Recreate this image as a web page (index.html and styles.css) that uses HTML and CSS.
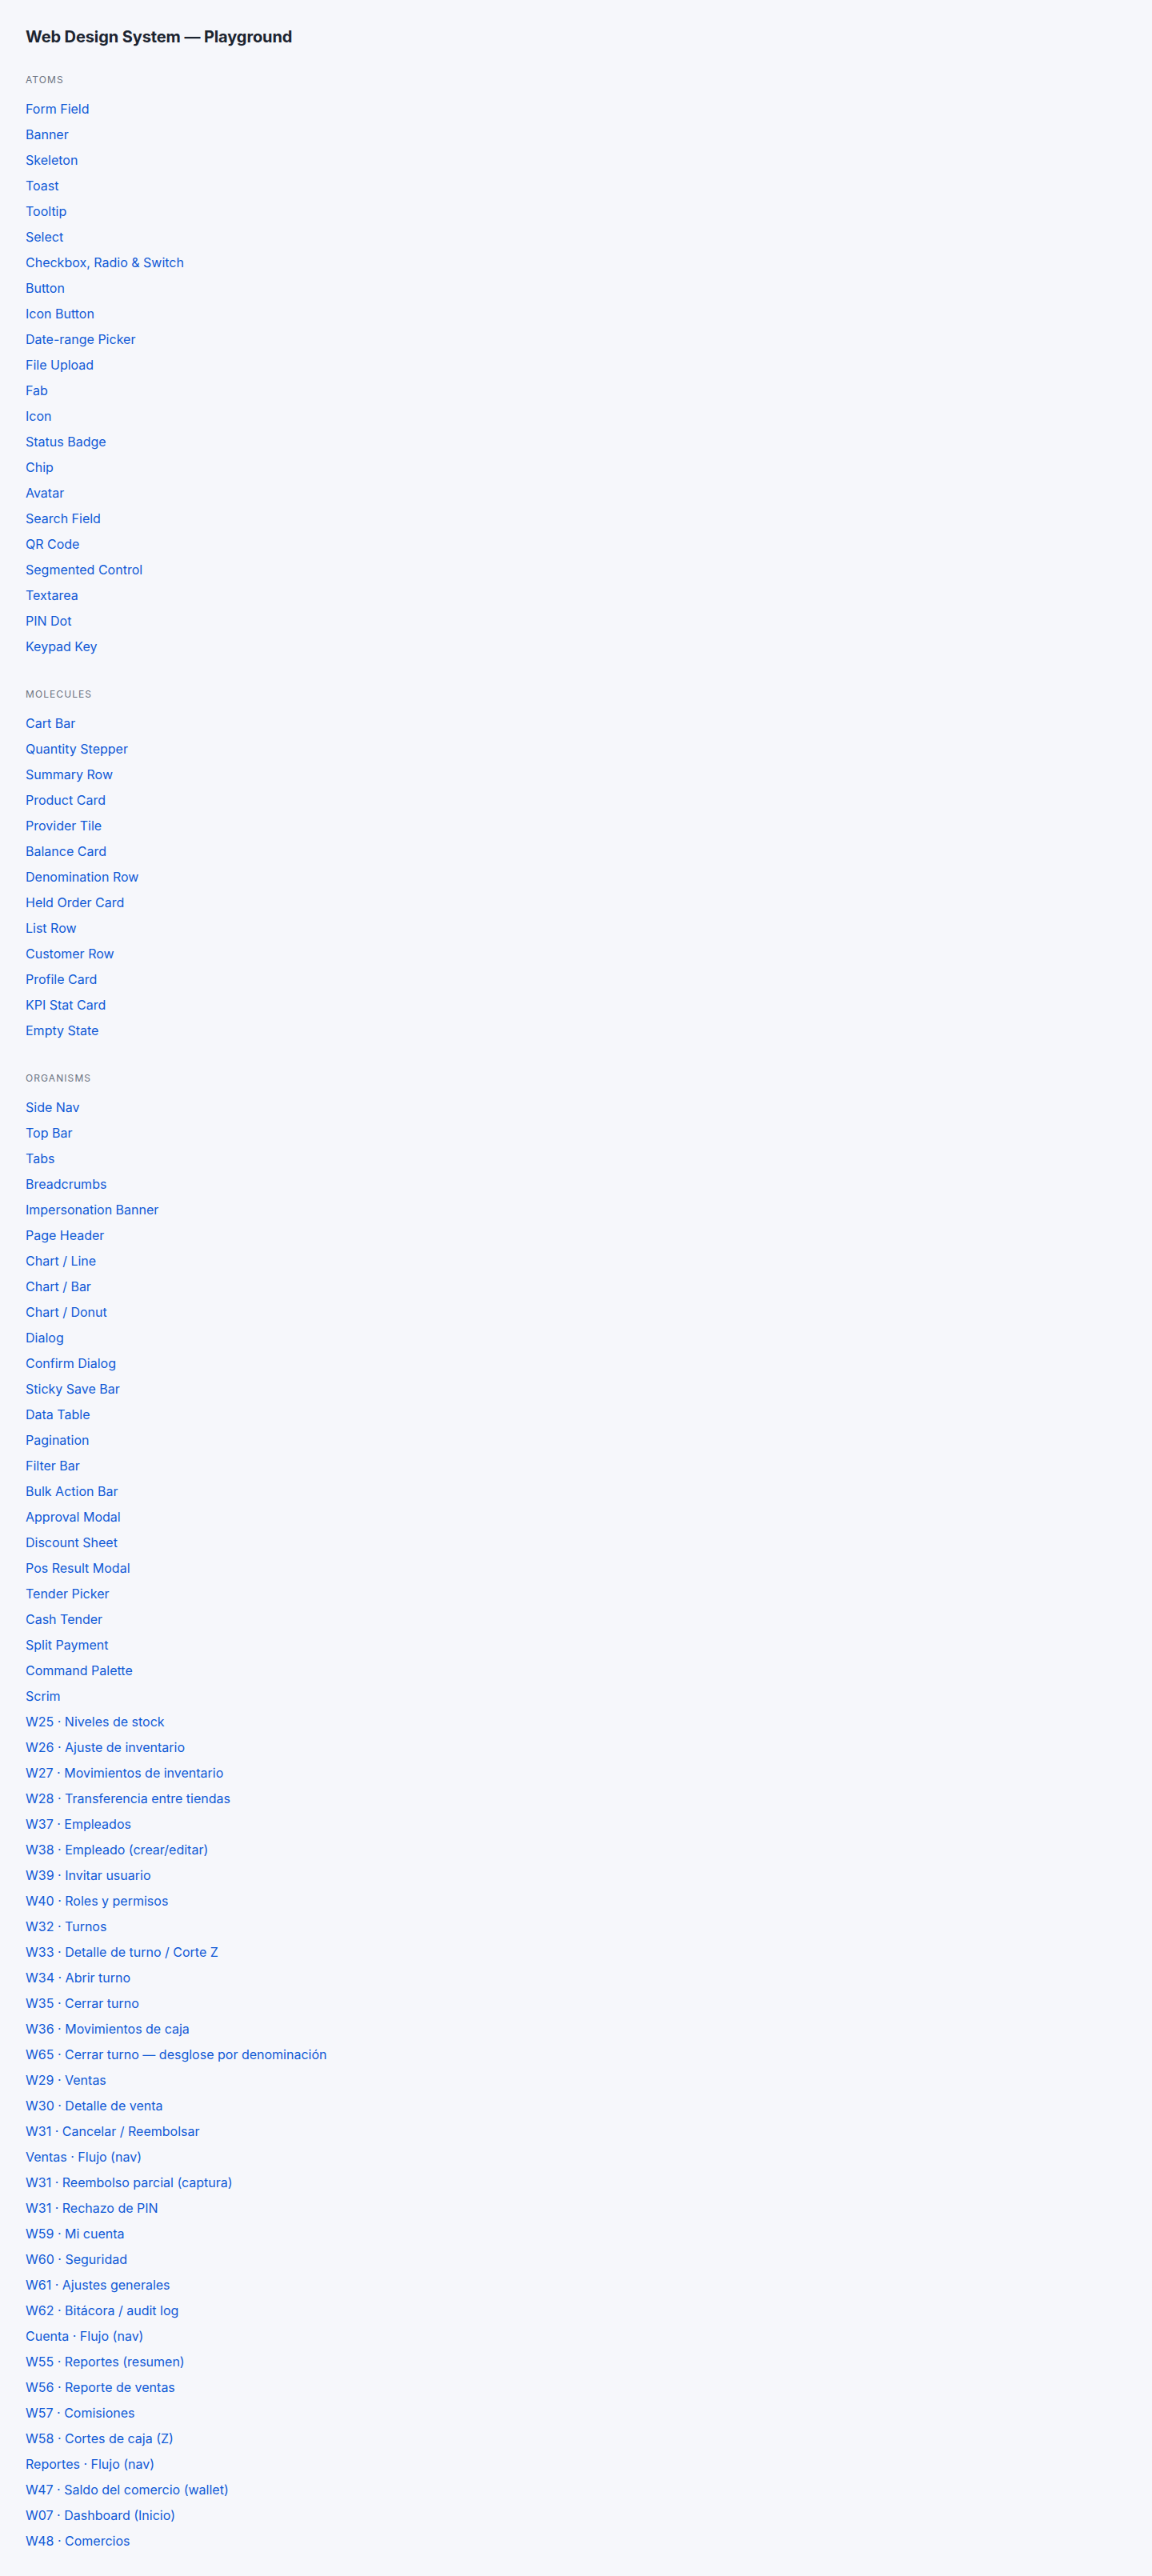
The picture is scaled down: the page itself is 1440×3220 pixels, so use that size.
FILE: index.html
```html
<!DOCTYPE html>
<html lang="es">
<head>
<meta charset="utf-8">
<title>Web Design System — Playground</title>
<link rel="stylesheet" href="styles.css">
</head>
<body>
<main class="playground">
  <h1 class="title">Web Design System — Playground</h1>

  <section class="group">
    <h2 class="group-label">Atoms</h2>
    <ul class="links">
      <li><a href="#">Form Field</a></li>
      <li><a href="#">Banner</a></li>
      <li><a href="#">Skeleton</a></li>
      <li><a href="#">Toast</a></li>
      <li><a href="#">Tooltip</a></li>
      <li><a href="#">Select</a></li>
      <li><a href="#">Checkbox, Radio &amp; Switch</a></li>
      <li><a href="#">Button</a></li>
      <li><a href="#">Icon Button</a></li>
      <li><a href="#">Date-range Picker</a></li>
      <li><a href="#">File Upload</a></li>
      <li><a href="#">Fab</a></li>
      <li><a href="#">Icon</a></li>
      <li><a href="#">Status Badge</a></li>
      <li><a href="#">Chip</a></li>
      <li><a href="#">Avatar</a></li>
      <li><a href="#">Search Field</a></li>
      <li><a href="#">QR Code</a></li>
      <li><a href="#">Segmented Control</a></li>
      <li><a href="#">Textarea</a></li>
      <li><a href="#">PIN Dot</a></li>
      <li><a href="#">Keypad Key</a></li>
    </ul>
  </section>

  <section class="group">
    <h2 class="group-label">Molecules</h2>
    <ul class="links">
      <li><a href="#">Cart Bar</a></li>
      <li><a href="#">Quantity Stepper</a></li>
      <li><a href="#">Summary Row</a></li>
      <li><a href="#">Product Card</a></li>
      <li><a href="#">Provider Tile</a></li>
      <li><a href="#">Balance Card</a></li>
      <li><a href="#">Denomination Row</a></li>
      <li><a href="#">Held Order Card</a></li>
      <li><a href="#">List Row</a></li>
      <li><a href="#">Customer Row</a></li>
      <li><a href="#">Profile Card</a></li>
      <li><a href="#">KPI Stat Card</a></li>
      <li><a href="#">Empty State</a></li>
    </ul>
  </section>

  <section class="group">
    <h2 class="group-label">Organisms</h2>
    <ul class="links">
      <li><a href="#">Side Nav</a></li>
      <li><a href="#">Top Bar</a></li>
      <li><a href="#">Tabs</a></li>
      <li><a href="#">Breadcrumbs</a></li>
      <li><a href="#">Impersonation Banner</a></li>
      <li><a href="#">Page Header</a></li>
      <li><a href="#">Chart / Line</a></li>
      <li><a href="#">Chart / Bar</a></li>
      <li><a href="#">Chart / Donut</a></li>
      <li><a href="#">Dialog</a></li>
      <li><a href="#">Confirm Dialog</a></li>
      <li><a href="#">Sticky Save Bar</a></li>
      <li><a href="#">Data Table</a></li>
      <li><a href="#">Pagination</a></li>
      <li><a href="#">Filter Bar</a></li>
      <li><a href="#">Bulk Action Bar</a></li>
      <li><a href="#">Approval Modal</a></li>
      <li><a href="#">Discount Sheet</a></li>
      <li><a href="#">Pos Result Modal</a></li>
      <li><a href="#">Tender Picker</a></li>
      <li><a href="#">Cash Tender</a></li>
      <li><a href="#">Split Payment</a></li>
      <li><a href="#">Command Palette</a></li>
      <li><a href="#">Scrim</a></li>
      <li><a href="#">W25 · Niveles de stock</a></li>
      <li><a href="#">W26 · Ajuste de inventario</a></li>
      <li><a href="#">W27 · Movimientos de inventario</a></li>
      <li><a href="#">W28 · Transferencia entre tiendas</a></li>
      <li><a href="#">W37 · Empleados</a></li>
      <li><a href="#">W38 · Empleado (crear/editar)</a></li>
      <li><a href="#">W39 · Invitar usuario</a></li>
      <li><a href="#">W40 · Roles y permisos</a></li>
      <li><a href="#">W32 · Turnos</a></li>
      <li><a href="#">W33 · Detalle de turno / Corte Z</a></li>
      <li><a href="#">W34 · Abrir turno</a></li>
      <li><a href="#">W35 · Cerrar turno</a></li>
      <li><a href="#">W36 · Movimientos de caja</a></li>
      <li><a href="#">W65 · Cerrar turno — desglose por denominación</a></li>
      <li><a href="#">W29 · Ventas</a></li>
      <li><a href="#">W30 · Detalle de venta</a></li>
      <li><a href="#">W31 · Cancelar / Reembolsar</a></li>
      <li><a href="#">Ventas · Flujo (nav)</a></li>
      <li><a href="#">W31 · Reembolso parcial (captura)</a></li>
      <li><a href="#">W31 · Rechazo de PIN</a></li>
      <li><a href="#">W59 · Mi cuenta</a></li>
      <li><a href="#">W60 · Seguridad</a></li>
      <li><a href="#">W61 · Ajustes generales</a></li>
      <li><a href="#">W62 · Bitácora / audit log</a></li>
      <li><a href="#">Cuenta · Flujo (nav)</a></li>
      <li><a href="#">W55 · Reportes (resumen)</a></li>
      <li><a href="#">W56 · Reporte de ventas</a></li>
      <li><a href="#">W57 · Comisiones</a></li>
      <li><a href="#">W58 · Cortes de caja (Z)</a></li>
      <li><a href="#">Reportes · Flujo (nav)</a></li>
      <li><a href="#">W47 · Saldo del comercio (wallet)</a></li>
      <li><a href="#">W07 · Dashboard (Inicio)</a></li>
      <li><a href="#">W48 · Comercios</a></li>
    </ul>
  </section>
</main>
</body>
</html>
```

FILE: styles.css
```css
html, body {
  margin: 0;
  padding: 0;
  background: #f6f7fb;
}

body {
  font-family: Inter, "Noto Sans", "Liberation Sans", sans-serif;
  color: #1c2430;
}

.playground {
  padding: 32px;
}

.title {
  margin: 0 0 32px;
  font-size: 20px;
  line-height: 28px;
  font-weight: 700;
  color: #1c2430;
  letter-spacing: -0.1px;
}

.group {
  margin: 0 0 36px;
}

.group-label {
  margin: 0 0 12px;
  font-size: 12px;
  line-height: 16px;
  font-weight: 400;
  letter-spacing: 0.09em;
  text-transform: uppercase;
  color: #6b7280;
}

.links {
  list-style: none;
  margin: 0;
  padding: 0;
}

.links li a {
  display: inline-block;
  padding: 4px 0;
  font-size: 16px;
  line-height: 24px;
  color: #0f59d6;
  text-decoration: none;
}
```
